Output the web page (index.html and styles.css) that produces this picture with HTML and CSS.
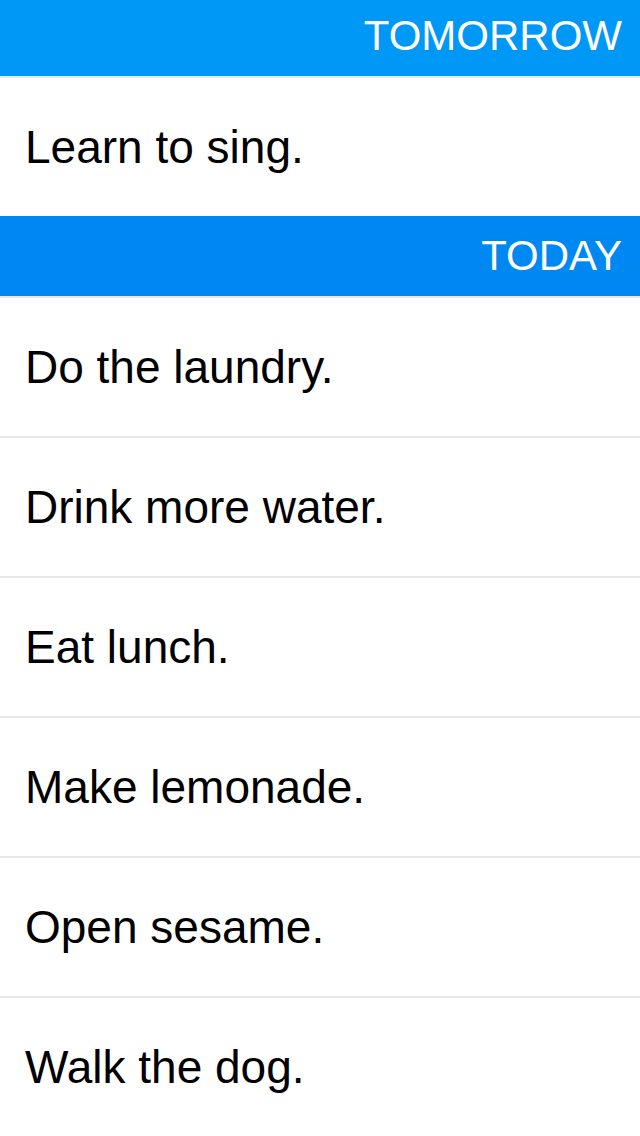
FILE: index.html
```html
<!DOCTYPE html>
<html lang="en">
<head>
<meta charset="utf-8">
<title>Tasks</title>
<link rel="stylesheet" href="styles.css">
</head>
<body>
<main class="list">
  <section class="section">
    <header class="section-header section-header--tomorrow section-header--clipped">TOMORROW</header>
    <div class="row">Learn to sing.</div>
  </section>
  <section class="section">
    <header class="section-header section-header--today">TODAY</header>
    <div class="row">Do the laundry.</div>
    <div class="row">Drink more water.</div>
    <div class="row">Eat lunch.</div>
    <div class="row">Make lemonade.</div>
    <div class="row">Open sesame.</div>
    <div class="row">Walk the dog.</div>
  </section>
</main>
</body>
</html>
```

FILE: styles.css
```css
* { box-sizing: border-box; }
html, body {
  margin: 0;
  padding: 0;
  background: #ffffff;
}
body {
  width: 640px;
  height: 1136px;
  overflow: hidden;
  font-family: "Liberation Sans", Arial, sans-serif;
}
.list {
  display: flex;
  flex-direction: column;
}
.section {
  display: flex;
  flex-direction: column;
}
.section-header {
  height: 80px;
  display: flex;
  align-items: center;
  justify-content: flex-end;
  padding-right: 18px;
  color: #ffffff;
  font-size: 42px;
  font-weight: 400;
  letter-spacing: 0;
}
.section-header--clipped {
  height: 76px;
  padding-bottom: 4px;
}
.section-header--tomorrow { background: #0098f6; }
.section-header--today { background: #0088f2; }
.row {
  height: 140px;
  border-top: 2px solid #e8e8e8;
  display: flex;
  align-items: center;
  padding-left: 25px;
  font-size: 46px;
  color: #000000;
}
```
